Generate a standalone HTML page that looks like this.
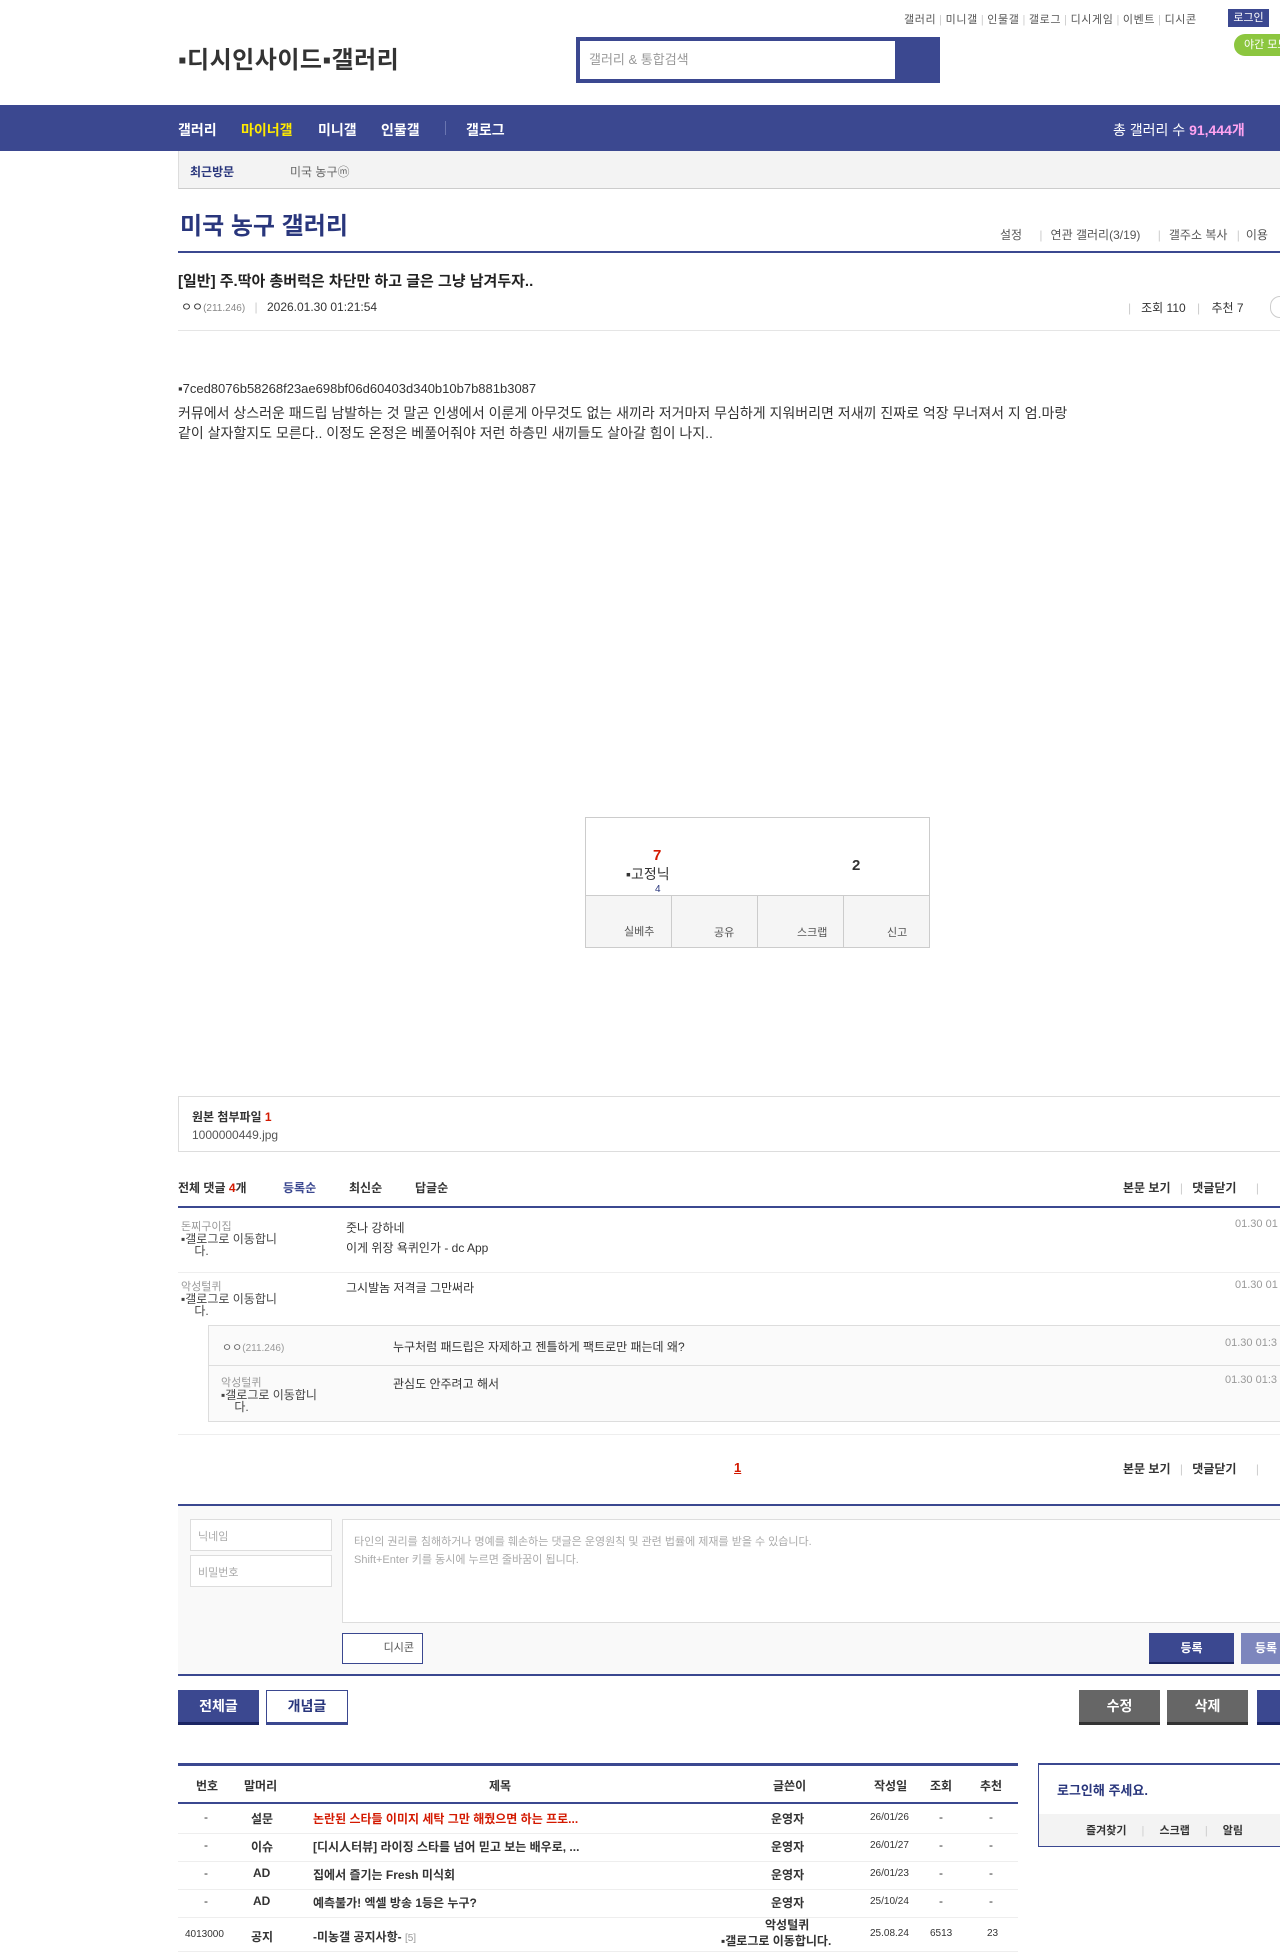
<!DOCTYPE html>
<html><head><meta charset="utf-8"><style>
*{margin:0;padding:0;box-sizing:border-box}
body{width:1280px;height:1960px;overflow:hidden;position:relative;background:#fff;font-family:"Liberation Sans","Noto Sans CJK KR",sans-serif;color:#333;font-size:13px}
.a{position:absolute;white-space:nowrap}
.b{font-weight:bold}
.blue{color:#29367c}
.line{position:absolute;background:#3b4890}
.gl{position:absolute;background:#e5e5e5;height:1px}
.btn{position:absolute;text-align:center;font-weight:bold;font-size:14px;border-bottom:3px solid #1b2563}
.s{color:#ccc;margin:0 3px}
</style></head><body>
<!-- top links -->
<div class="a" style="top:11px;left:904px;font-size:11px;color:#555;letter-spacing:0.6px">갤러리<span class="s">|</span>미니갤<span class="s">|</span>인물갤<span class="s">|</span>갤로그<span class="s">|</span>디시게임<span class="s">|</span>이벤트<span class="s">|</span>디시콘</div>
<div class="a" style="top:9px;left:1228px;width:41px;height:18px;background:#3b4890;color:#fff;font-size:11px;text-align:center;line-height:18px">로그인</div>
<div class="a" style="top:34px;left:1234px;width:60px;height:22px;background:#8cc63f;color:#fff;font-size:11px;line-height:22px;padding-left:10px;border-radius:11px">야간 모드</div>
<div class="a" style="top:40px;left:178px;font-size:24px;color:#333;font-weight:bold;letter-spacing:0.5px">▪디시인사이드▪갤러리</div>
<div class="a" style="top:37px;left:576px;width:364px;height:46px;background:#3b4890"></div>
<div class="a" style="top:41px;left:580px;width:315px;height:38px;background:#fff;color:#999;font-size:13px;line-height:38px;padding-left:9px">갤러리 &amp; 통합검색</div>
<!-- nav -->
<div class="a" style="top:105px;left:0;width:1280px;height:46px;background:#3b4890"></div>
<div class="a b" style="top:120px;left:178px;color:#fff;font-size:14px">갤러리</div>
<div class="a b" style="top:120px;left:241px;color:#ffea00;font-size:14px">마이너갤</div>
<div class="a b" style="top:120px;left:318px;color:#fff;font-size:14px">미니갤</div>
<div class="a b" style="top:120px;left:381px;color:#fff;font-size:14px">인물갤</div>
<div class="a" style="top:121px;left:445px;width:1px;height:14px;background:#6a75b0"></div>
<div class="a b" style="top:120px;left:466px;color:#fff;font-size:14px">갤로그</div>
<div class="a" style="top:120px;left:1113px;color:#fff;font-size:14px">총 갤러리 수 <b style="color:#ffa3f0">91,444개</b></div>
<div class="a" style="top:151px;left:178px;width:1110px;height:38px;background:#f3f3f3;border-left:1px solid #ddd;border-bottom:1px solid #ccc"></div>
<div class="a b" style="top:163px;left:190px;font-size:12px;color:#29367c">최근방문</div>
<div class="a" style="top:163px;left:290px;font-size:12px;color:#666">미국 농구ⓜ</div>
<!-- title -->
<div class="a blue" style="top:206px;left:180px;font-size:24px;font-weight:bold">미국 농구 갤러리</div>
<div class="a" style="top:226px;left:1000px;font-size:12px;color:#555">설정 <span style="color:#ccc;margin:0 8px 0 14px">|</span>연관 갤러리(3/19) <span style="color:#ccc;margin:0 8px 0 14px">|</span>갤주소 복사 <span style="color:#ccc;margin:0 6px">|</span>이용</div>
<div class="line" style="top:251px;left:178px;width:1102px;height:2px"></div>
<div class="a b" style="top:270px;left:178px;font-size:15px;color:#222">[일반] 주.딱아 총버럭은 차단만 하고 글은 그냥 남겨두자..</div>
<div class="a" style="top:298px;left:181px;font-size:12px;color:#333">ㅇㅇ<span style="font-size:10px;color:#888">(211.246)</span> <span style="color:#ccc;margin:0 6px">|</span> 2026.01.30 01:21:54</div>
<div class="a" style="top:299px;left:1128px;font-size:12px;color:#333"><span style="color:#ccc">|</span>&nbsp;&nbsp; 조회 110 <span style="color:#ccc;margin:0 8px">|</span> 추천 7</div>
<div class="a" style="top:296px;left:1270px;width:20px;height:22px;border:1px solid #ccc;border-radius:11px"></div>
<div class="gl" style="top:330px;left:178px;width:1102px"></div>
<!-- body -->
<div class="a" style="top:381px;left:178px;font-size:13px;color:#333">▪7ced8076b58268f23ae698bf06d60403d340b10b7b881b3087</div>
<div class="a" style="top:403px;left:178px;font-size:14px;color:#333;line-height:20px">커뮤에서 상스러운 패드립 남발하는 것 말곤 인생에서 이룬게 아무것도 없는 새끼라 저거마저 무심하게 지워버리면 저새끼 진짜로 억장 무너져서 지 엄.마랑<br>같이 살자할지도 모른다.. 이정도 온정은 베풀어줘야 저런 하층민 새끼들도 살아갈 힘이 나지..</div>
<!-- recommend box -->
<div class="a" style="top:817px;left:585px;width:345px;height:131px;border:1px solid #ccc"></div>
<div class="a" style="top:895px;left:586px;width:343px;height:52px;background:#f5f5f5;border-top:1px solid #ccc"></div>
<div class="a" style="top:895px;left:671px;width:1px;height:52px;background:#ccc"></div>
<div class="a" style="top:895px;left:757px;width:1px;height:52px;background:#ccc"></div>
<div class="a" style="top:895px;left:843px;width:1px;height:52px;background:#ccc"></div>
<div class="a" style="top:923px;left:624px;font-size:11px;color:#555">실베추</div>
<div class="a" style="top:924px;left:714px;font-size:11px;color:#555">공유</div>
<div class="a" style="top:924px;left:797px;font-size:11px;color:#555">스크랩</div>
<div class="a" style="top:924px;left:887px;font-size:11px;color:#555">신고</div>
<div class="a b" style="top:847px;left:653px;font-size:15px;color:#d31900">7</div>
<div class="a" style="top:864px;left:626px;font-size:14px;color:#333">▪고정닉</div>
<div class="a" style="top:884px;left:655px;font-size:10px;color:#29367c">4</div>
<div class="a b" style="top:857px;left:852px;font-size:15px;color:#333">2</div>
<!-- attachment -->
<div class="a" style="top:1096px;left:178px;width:1110px;height:56px;border:1px solid #ddd"></div>
<div class="a b" style="top:1108px;left:192px;font-size:12px;color:#333">원본 첨부파일 <span style="color:#d31900">1</span></div>
<div class="a" style="top:1128px;left:192px;font-size:12px;color:#555">1000000449.jpg</div>
<!-- comments -->
<div class="a b" style="top:1179px;left:178px;font-size:12px;color:#333">전체 댓글 <span style="color:#d31900">4</span>개</div>
<div class="a b" style="top:1179px;left:283px;font-size:12px;color:#3b4890">등록순</div>
<div class="a b" style="top:1179px;left:349px;font-size:12px">최신순</div>
<div class="a b" style="top:1179px;left:415px;font-size:12px">답글순</div>
<div class="a b" style="top:1179px;left:1123px;font-size:12px">본문 보기 <span style="color:#ccc;font-weight:normal;margin:0 6px">|</span> 댓글닫기 <span style="color:#ccc;font-weight:normal;margin-left:16px">|</span></div>
<div class="line" style="top:1206px;left:178px;width:1102px;height:2px"></div>
<div class="a" style="top:1218px;left:181px;font-size:11px;color:#999">돈찌구이집</div>
<div class="a" style="top:1233px;left:181px;font-size:12px;color:#444;line-height:12px">▪갤로그로 이동합니<br>&nbsp;&nbsp;&nbsp;&nbsp;다.</div>
<div class="a" style="top:1219px;left:346px;font-size:12px;color:#333">줏나 강하네</div>
<div class="a" style="top:1239px;left:346px;font-size:12px;color:#333">이게 위장 욕퀴인가 - dc App</div>
<div class="a" style="top:1218px;left:1235px;font-size:11px;color:#999">01.30 01</div>
<div class="gl" style="top:1272px;left:178px;width:1102px;background:#eee"></div>
<div class="a" style="top:1278px;left:181px;font-size:11px;color:#999">악성털퀴</div>
<div class="a" style="top:1293px;left:181px;font-size:12px;color:#444;line-height:12px">▪갤로그로 이동합니<br>&nbsp;&nbsp;&nbsp;&nbsp;다.</div>
<div class="a" style="top:1279px;left:346px;font-size:12px;color:#333">그시발놈 저격글 그만써라</div>
<div class="a" style="top:1279px;left:1235px;font-size:11px;color:#999">01.30 01</div>
<div class="a" style="top:1325px;left:208px;width:1080px;height:97px;background:#fafafa;border:1px solid #ddd"></div>
<div class="gl" style="top:1365px;left:209px;width:1079px;background:#ddd"></div>
<div class="a" style="top:1339px;left:222px;font-size:11px;color:#666">ㅇㅇ<span style="font-size:10px;color:#999">(211.246)</span></div>
<div class="a" style="top:1338px;left:393px;font-size:12px;color:#333">누구처럼 패드립은 자제하고 젠틀하게 팩트로만 패는데 왜?</div>
<div class="a" style="top:1337px;left:1225px;font-size:11px;color:#999">01.30 01:3</div>
<div class="a" style="top:1374px;left:221px;font-size:11px;color:#999">악성털퀴</div>
<div class="a" style="top:1389px;left:221px;font-size:12px;color:#444;line-height:12px">▪갤로그로 이동합니<br>&nbsp;&nbsp;&nbsp;&nbsp;다.</div>
<div class="a" style="top:1375px;left:393px;font-size:12px;color:#333">관심도 안주려고 해서</div>
<div class="a" style="top:1374px;left:1225px;font-size:11px;color:#999">01.30 01:3</div>
<div class="gl" style="top:1434px;left:178px;width:1102px;background:#eee"></div>
<div class="a b" style="top:1460px;left:734px;font-size:13px;color:#d31900;text-decoration:underline">1</div>
<div class="a b" style="top:1460px;left:1123px;font-size:12px">본문 보기 <span style="color:#ccc;font-weight:normal;margin:0 6px">|</span> 댓글닫기 <span style="color:#ccc;font-weight:normal;margin-left:16px">|</span></div>
<!-- write -->
<div class="a" style="top:1504px;left:178px;width:1102px;height:172px;background:#f9f9f9;border-top:2px solid #3b4890;border-bottom:2px solid #3b4890"></div>
<div class="a" style="top:1519px;left:190px;width:142px;height:32px;background:#fff;border:1px solid #ddd;font-size:11px;color:#aaa;padding:8px 7px">닉네임</div>
<div class="a" style="top:1555px;left:190px;width:142px;height:32px;background:#fff;border:1px solid #ddd;font-size:11px;color:#aaa;padding:8px 7px">비밀번호</div>
<div class="a" style="top:1519px;left:342px;width:950px;height:104px;background:#fff;border:1px solid #ddd;font-size:11px;color:#aaa;padding:13px 11px;line-height:18px;white-space:normal">타인의 권리를 침해하거나 명예를 훼손하는 댓글은 운영원칙 및 관련 법률에 제재를 받을 수 있습니다.<br>Shift+Enter 키를 동시에 누르면 줄바꿈이 됩니다.</div>
<div class="a" style="top:1633px;left:342px;width:81px;height:31px;background:#fff;border:1px solid #3b4890;font-size:11px;color:#555;line-height:29px;text-align:right;padding-right:8px">디시콘</div>
<div class="a b" style="top:1633px;left:1149px;width:85px;height:31px;background:#3b4890;color:#fff;font-size:12px;line-height:31px;text-align:center;border-bottom:2px solid #1b2563">등록</div>
<div class="a b" style="top:1633px;left:1241px;width:60px;height:31px;background:#7d86bd;color:#fff;font-size:12px;line-height:31px;padding-left:14px">등록</div>
<!-- buttons -->
<div class="btn" style="top:1690px;left:178px;width:81px;height:35px;background:#3b4890;color:#fff;line-height:33px">전체글</div>
<div class="btn" style="top:1690px;left:266px;width:82px;height:35px;background:#fff;color:#29367c;border:1px solid #3b4890;border-bottom:3px solid #3b4890;line-height:31px">개념글</div>
<div class="btn" style="top:1690px;left:1079px;width:81px;height:35px;background:#666;color:#fff;line-height:33px;border-bottom-color:#333">수정</div>
<div class="btn" style="top:1690px;left:1167px;width:81px;height:35px;background:#666;color:#fff;line-height:33px;border-bottom-color:#333">삭제</div>
<div class="btn" style="top:1690px;left:1257px;width:60px;height:35px;background:#3b4890;color:#fff;line-height:33px">글</div>
<!-- list -->
<div class="line" style="top:1763px;left:178px;width:840px;height:3px"></div>
<div class="a b" style="top:1777px;left:196px;font-size:12px;color:#333">번호</div>
<div class="a b" style="top:1777px;left:244px;font-size:12px">말머리</div>
<div class="a b" style="top:1777px;left:489px;font-size:12px">제목</div>
<div class="a b" style="top:1777px;left:773px;font-size:12px">글쓴이</div>
<div class="a b" style="top:1777px;left:874px;font-size:12px">작성일</div>
<div class="a b" style="top:1777px;left:930px;font-size:12px">조회</div>
<div class="a b" style="top:1777px;left:980px;font-size:12px">추천</div>
<div class="line" style="top:1802px;left:178px;width:840px;height:2px"></div>
<div class="a" style="top:1810px;left:178px;width:840px;font-size:12px">
 <div class="a" style="left:26px">-</div><div class="a b" style="left:73px">설문</div><div class="a b" style="left:135px;color:#d31900">논란된 스타들 이미지 세탁 그만 해줬으면 하는 프로...</div><div class="a b" style="left:593px">운영자</div><div class="a" style="left:692px;top:2px;font-size:10px">26/01/26</div><div class="a" style="left:761px">-</div><div class="a" style="left:811px">-</div>
</div>
<div class="gl" style="top:1833px;left:178px;width:840px;background:#eee"></div>
<div class="a" style="top:1838px;left:178px;width:840px;font-size:12px">
 <div class="a" style="left:26px">-</div><div class="a b" style="left:73px">이슈</div><div class="a b" style="left:135px">[디시人터뷰] 라이징 스타를 넘어 믿고 보는 배우로, ...</div><div class="a b" style="left:593px">운영자</div><div class="a" style="left:692px;top:2px;font-size:10px">26/01/27</div><div class="a" style="left:761px">-</div><div class="a" style="left:811px">-</div>
</div>
<div class="gl" style="top:1861px;left:178px;width:840px;background:#eee"></div>
<div class="a" style="top:1866px;left:178px;width:840px;font-size:12px">
 <div class="a" style="left:26px">-</div><div class="a b" style="left:75px">AD</div><div class="a b" style="left:135px">집에서 즐기는 Fresh 미식회</div><div class="a b" style="left:593px">운영자</div><div class="a" style="left:692px;top:2px;font-size:10px">26/01/23</div><div class="a" style="left:761px">-</div><div class="a" style="left:811px">-</div>
</div>
<div class="gl" style="top:1889px;left:178px;width:840px;background:#eee"></div>
<div class="a" style="top:1894px;left:178px;width:840px;font-size:12px">
 <div class="a" style="left:26px">-</div><div class="a b" style="left:75px">AD</div><div class="a b" style="left:135px">예측불가! 엑셀 방송 1등은 누구?</div><div class="a b" style="left:593px">운영자</div><div class="a" style="left:692px;top:2px;font-size:10px">25/10/24</div><div class="a" style="left:761px">-</div><div class="a" style="left:811px">-</div>
</div>
<div class="gl" style="top:1917px;left:178px;width:840px;background:#eee"></div>
<div class="a" style="top:1928px;left:178px;width:840px;font-size:12px">
 <div class="a" style="left:7px;font-size:10px;top:1px">4013000</div><div class="a b" style="left:73px">공지</div><div class="a b" style="left:135px">-미농갤 공지사항- <span style="font-weight:normal;color:#999;font-size:10px">[5]</span></div><div class="a b" style="left:587px;top:-12px">악성털퀴</div><div class="a b" style="left:543px;top:4px">▪갤로그로 이동합니다.</div><div class="a" style="left:692px;font-size:10px">25.08.24</div><div class="a" style="left:752px;font-size:10px">6513</div><div class="a" style="left:809px;font-size:10px">23</div>
</div>
<div class="gl" style="top:1951px;left:178px;width:840px;background:#eee"></div>
<!-- login box -->
<div class="a" style="top:1763px;left:1038px;width:260px;height:84px;border:1px solid #3b4890;border-top-width:2px"></div>
<div class="a b" style="top:1780px;left:1057px;font-size:13px;color:#29367c">로그인해 주세요.</div>
<div class="a" style="top:1814px;left:1039px;width:260px;height:32px;background:#f3f3f3"></div>
<div class="a b" style="top:1822px;left:1086px;font-size:11px;color:#333">즐겨찾기 <span style="color:#ccc;font-weight:normal;margin:0 12px">|</span> 스크랩 <span style="color:#ccc;font-weight:normal;margin:0 12px">|</span> 알림</div>
</body></html>
